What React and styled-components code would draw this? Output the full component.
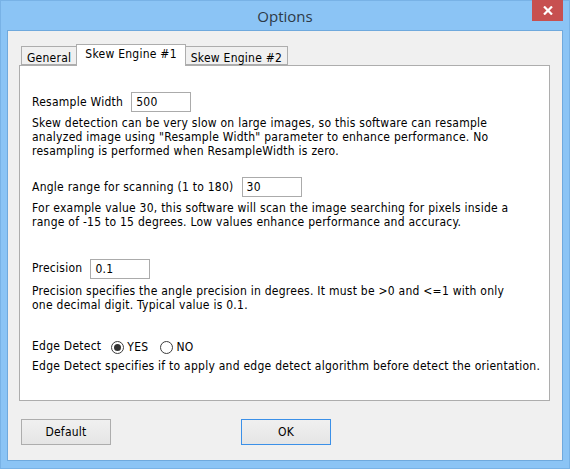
import React from 'react'
import styled, { createGlobalStyle } from 'styled-components'

const GlobalStyle = createGlobalStyle`
  html, body {
    margin: 0;
    padding: 0;
    background: #88c3f5;
  }
`

const UI_FONT = `"DejaVu Sans Condensed", "DejaVu Sans", Verdana, sans-serif`

const Frame = styled.div`
  width: 570px;
  height: 469px;
  box-sizing: border-box;
  background: #8bc4f5;
  border: 1px solid #78b2e6;
  display: flex;
  flex-direction: column;
  font-family: ${UI_FONT};
  font-size: 12px;
  letter-spacing: 0.25px;
  color: #000;
`

const TitleBar = styled.div`
  height: 29px;
  display: grid;
  grid-template-columns: 1fr auto 1fr;
  align-items: start;
`

const Title = styled.div`
  grid-column: 2;
  font-family: "Open Sans", "Noto Sans", sans-serif;
  font-size: 15px;
  letter-spacing: 0;
  line-height: 30px;
  color: #2d3a47;
`

const CloseButton = styled.div`
  grid-column: 3;
  justify-self: end;
  margin-right: 6px;
  margin-top: -1px;
  width: 31px;
  height: 21px;
  background: #c75050;
  display: flex;
  align-items: center;
  justify-content: center;
`

const Client = styled.div`
  flex: 1;
  margin: 0 6px 7px 6px;
  background: #f0f0f0;
  border: 1px solid #6fa9dd;
  display: flex;
  flex-direction: column;
  padding: 0 12px 0 11px;
`

const TabStrip = styled.div`
  display: flex;
  align-items: flex-end;
  padding-top: 13px;
  padding-left: 2px;
  height: 21px;
`

const Tab = styled.div`
  box-sizing: border-box;
  height: ${p => (p.active ? '22px' : '19px')};
  padding: ${p => (p.active ? '1px 8px 0 8px' : '3px 5px 0 5px')};
  margin-bottom: ${p => (p.active ? '-1px' : '0')};
  background: ${p => (p.active ? '#fff' : '#f0f0f0')};
  border: 1px solid #adadad;
  border-bottom: ${p => (p.active ? 'none' : '1px solid #adadad')};
  margin-left: ${p => (p.first ? '0' : '-1px')};
  position: relative;
  z-index: ${p => (p.active ? 1 : 0)};
  white-space: nowrap;
  line-height: 16px;
`

const Panel = styled.div`
  height: 336px;
  box-sizing: border-box;
  background: #fff;
  border: 1px solid #adadad;
  padding: 26px 8px 0 12px;
  display: flex;
  flex-direction: column;
`

const FieldRow = styled.div`
  display: flex;
  align-items: center;
  gap: 8px;
  margin-top: ${p => p.gap || 0}px;
`

const Label = styled.span`
  line-height: 14px;
  margin-top: ${p => p.shift || 0}px;
`

const TextBox = styled.div`
  box-sizing: border-box;
  width: ${p => p.width}px;
  height: 20px;
  border: 1px solid #ababab;
  background: #fff;
  padding: 0 4px;
  line-height: 18px;
`

const Help = styled.p`
  margin: ${p => p.gap || 4}px 0 0 0;
  line-height: 14px;
  white-space: nowrap;
`

const RadioGroup = styled.div`
  display: flex;
  align-items: center;
  gap: 12px;
  margin-left: 2px;
`

const RadioOption = styled.label`
  display: flex;
  align-items: center;
  gap: 3px;
`

const RadioCircle = styled.span`
  box-sizing: border-box;
  width: 13px;
  height: 13px;
  border-radius: 50%;
  border: 1px solid #3c3c3c;
  background: #fff;
  display: flex;
  align-items: center;
  justify-content: center;

  &::after {
    content: '';
    width: 7px;
    height: 7px;
    border-radius: 50%;
    background: ${p => (p.checked ? '#333' : 'transparent')};
  }
`

const ButtonBar = styled.div`
  display: flex;
  gap: 130px;
  padding: 18px 0 0 2px;
`

const Button = styled.div`
  box-sizing: border-box;
  width: 90px;
  height: 26px;
  border: 1px solid ${p => (p.primary ? '#3b90e8' : '#adadad')};
  background: linear-gradient(#f0f0f0, #e5e5e5);
  display: flex;
  align-items: center;
  justify-content: center;
`

const App = () => {
  return (
    <>
      <GlobalStyle />
      <Frame>
        <TitleBar>
          <Title>Options</Title>
          <CloseButton>
            <svg width="10" height="9" viewBox="0 0 10 9">
              <path d="M1 0.5 L9 8.5 M9 0.5 L1 8.5" stroke="#fff" strokeWidth="2.2" />
            </svg>
          </CloseButton>
        </TitleBar>
        <Client>
          <TabStrip>
            <Tab first>General</Tab>
            <Tab active>Skew Engine #1</Tab>
            <Tab>Skew Engine #2</Tab>
          </TabStrip>
          <Panel>
            <FieldRow>
              <Label>Resample Width</Label>
              <TextBox width={60}>500</TextBox>
            </FieldRow>
            <Help gap={4}>
              Skew detection can be very slow on large images, so this software can resample
              <br />
              analyzed image using "Resample Width" parameter to enhance performance. No
              <br />
              resampling is performed when ResampleWidth is zero.
            </Help>
            <FieldRow gap={19}>
              <Label>Angle range for scanning (1 to 180)</Label>
              <TextBox width={60}>30</TextBox>
            </FieldRow>
            <Help gap={4}>
              For example value 30, this software will scan the image searching for pixels inside a
              <br />
              range of -15 to 15 degrees. Low values enhance performance and accuracy.
            </Help>
            <FieldRow gap={30}>
              <Label shift={-3}>Precision</Label>
              <TextBox width={60}>0.1</TextBox>
            </FieldRow>
            <Help gap={5}>
              Precision specifies the angle precision in degrees. It must be &gt;0 and &lt;=1 with only
              <br />
              one decimal digit. Typical value is 0.1.
            </Help>
            <FieldRow gap={28}>
              <Label shift={-3}>Edge Detect</Label>
              <RadioGroup>
                <RadioOption>
                  <RadioCircle checked />
                  YES
                </RadioOption>
                <RadioOption>
                  <RadioCircle />
                  NO
                </RadioOption>
              </RadioGroup>
            </FieldRow>
            <Help gap={5}>
              Edge Detect specifies if to apply and edge detect algorithm before detect the orientation.
            </Help>
          </Panel>
          <ButtonBar>
            <Button>Default</Button>
            <Button primary>OK</Button>
          </ButtonBar>
        </Client>
      </Frame>
    </>
  )
}

export default App
